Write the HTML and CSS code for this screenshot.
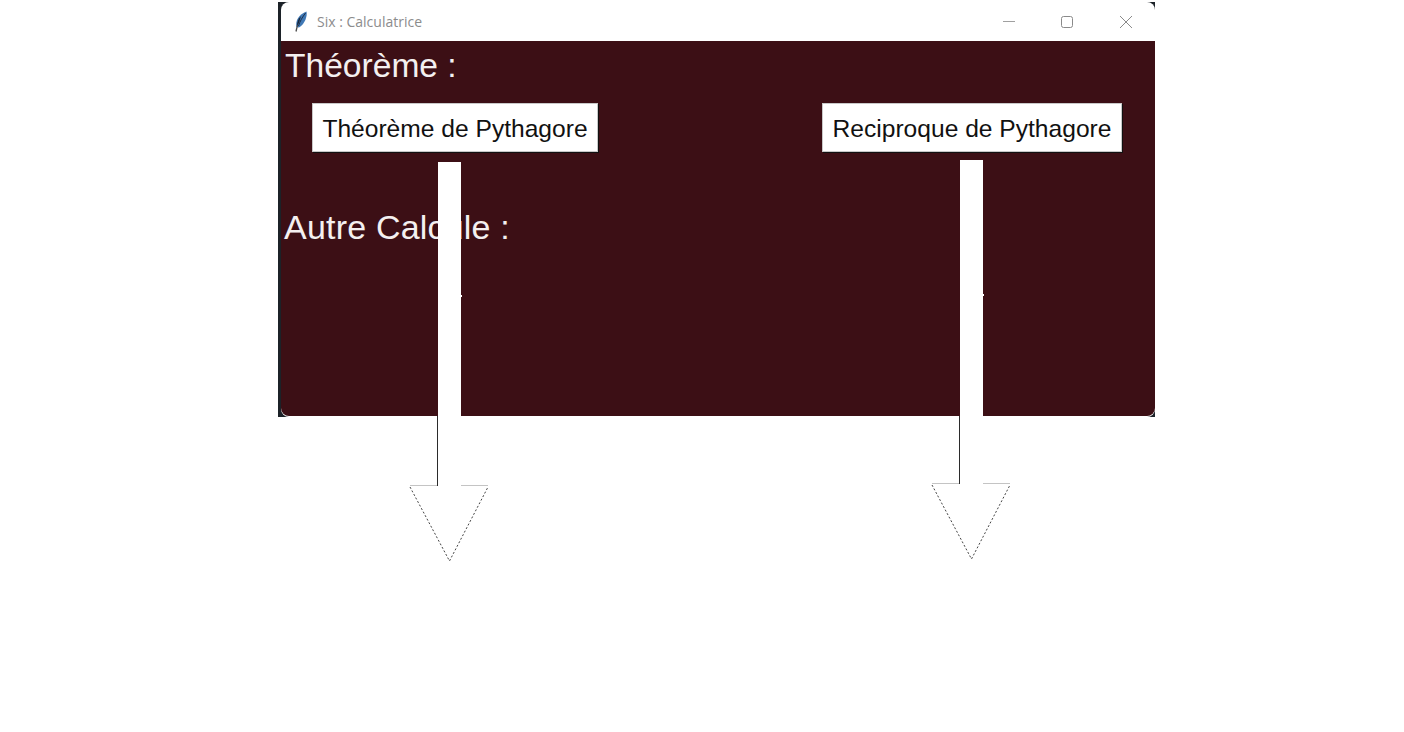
FILE: index.html
```html
<!doctype html>
<html>
<head>
<meta charset="utf-8">
<title>Six : Calculatrice</title>
<link rel="stylesheet" href="styles.css">
</head>

<body>
<div class="window">
	<div class="frame">
		<div class="titlebar">
			<svg class="feather" width="14" height="21" viewBox="0 0 14 21">
				<path d="M2.500 16 C1 10 5 3 12.500 0.500 C13.500 5 11 13 5 16.500 Z" fill="#3f78b5"/>
				<path d="M7 5 C4 8 3 11 3 15 L5 12 Z" fill="#16263c"/>
				<path d="M11.500 2 C8.500 6 6 10 4.500 15" stroke="#1b2f4a" stroke-width="1" fill="none"/>
				<path d="M3.500 14 L2 20.500" stroke="#4a4a4a" stroke-width="1.300" fill="none"/>
			</svg>
			<span class="title">Six : Calculatrice</span>
			<div class="controls">
				<svg width="58" height="16" viewBox="0 0 58 16"><path d="M22 7.500 H34" stroke="#a0a0a0" fill="none"/></svg>
				<svg width="58" height="16" viewBox="0 0 58 16"><rect x="22.500" y="2.500" width="11" height="11" rx="2" stroke="#8a8a8a" fill="none"/></svg>
				<svg width="58" height="16" viewBox="0 0 58 16"><path d="M23 2 L35 14 M35 2 L23 14" stroke="#8a8a8a" fill="none"/></svg>
			</div>
		</div>
		<div class="content">
			<h2 class="heading">Théorème :</h2>
			<div class="buttons">
				<button class="btn">Théorème de Pythagore</button>
				<button class="btn">Reciproque de Pythagore</button>
			</div>
			<h2 class="heading heading2">Autre Calcule :</h2>
		</div>
	</div>
</div>

<svg class="arrows" width="1404" height="732" viewBox="0 0 1404 732">
	<path class="arrow" d="M438 162 H461 V486 H488 L449.500 561 L410 486 H438 Z"/>
	<path class="arrow" d="M960 160 H983 V484 H1010 L971.500 559 L932 484 H960 Z"/>
	<path class="arrow" d="M461 295 H462 V297 H461 Z M983 294 H984 V296 H983 Z"/>
	<path class="edge" d="M437.500 416 V486"/>
	<path class="edge" d="M959.500 416 V484"/>
	<path class="hair" d="M410 485.500 H437 M461 485.500 H488 M932 483.500 H959 M983 483.500 H1010"/>
	<path class="dash" d="M410 487 L449.500 561 L488 487"/>
	<path class="dash" d="M932 485 L971.500 559 L1010 485"/>
</svg>
</body>
</html>
```

FILE: styles.css
```css
*{margin:0;padding:0;box-sizing:border-box;}
html,body{height:100%;background:#fff;overflow:hidden;}

.window{width:877px;height:415px;margin:2px 0 0 278px;padding-left:3px;background:#1c2228;}
.frame{height:100%;background:#fff;border-radius:8px;display:flex;flex-direction:column;}

.titlebar{height:39px;display:flex;align-items:center;padding-left:13px;flex:none;}
.feather{flex:none;margin-right:9px;}
.title{font:14px "Open Sans","Noto Sans",sans-serif;color:#8c8c8c;}
.controls{margin-left:auto;display:flex;}
.controls svg{display:block;}

.content{flex:1;margin-bottom:1px;background:#3c0f15;border-radius:0 0 8px 8px;padding:6px 33px 0 4px;}
.heading{font:400 33.600px/38px "Liberation Sans",Arial,sans-serif;color:#f4f0f0;}
.heading2{margin-top:56px;margin-left:-1px;font-size:34px;letter-spacing:.2px;}

.buttons{display:flex;justify-content:space-between;margin:18px 0 0 27px;}
.btn{width:286px;height:49px;padding-top:2px;background:#fff;border:1px solid #c8c8c8;box-shadow:1px 1px 0 #111;font:24.600px "Liberation Sans",Arial,sans-serif;color:#111;}
.btn:last-child{width:300px;}

.arrows{position:absolute;left:0;top:0;}
.arrow{fill:#fff;}
.edge{stroke:#2b2b2b;stroke-width:1;fill:none;}
.hair{stroke:#c4c4c4;stroke-width:1;fill:none;}
.dash{stroke:#444;stroke-width:1;stroke-dasharray:2 2;fill:none;}
```
